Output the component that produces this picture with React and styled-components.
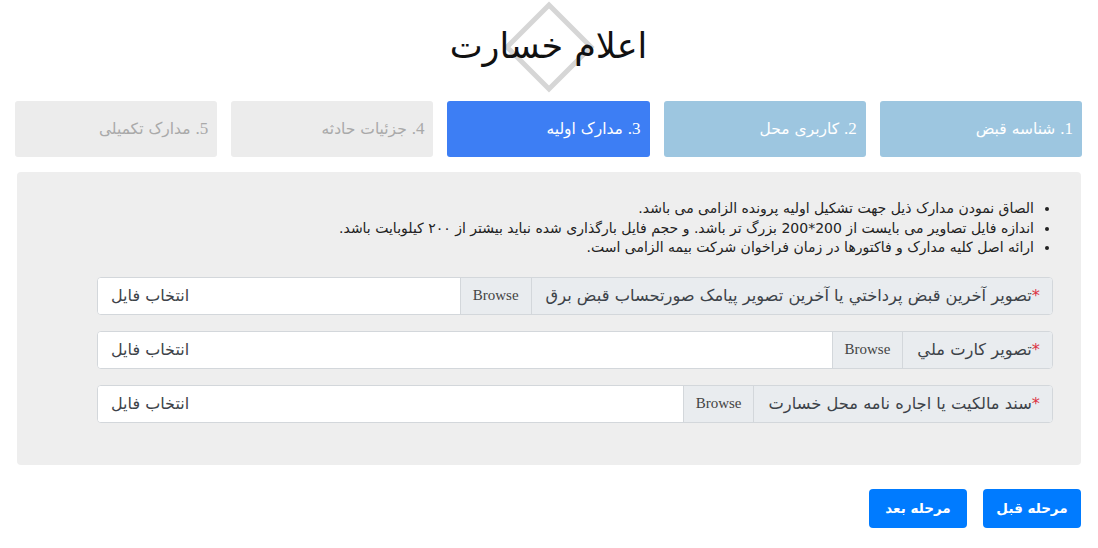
import React from 'react';
import { styled, createGlobalStyle } from 'styled-components';

const GlobalStyle = createGlobalStyle`
   html, body {
      margin: 0;
      padding: 0;
      background: #fff;
   }
   body {
      font-family: "DejaVu Sans", "Noto Sans", sans-serif;
      direction: rtl;
   }
`;

const steps = [
   { num: '1', title: 'شناسه قبض', state: 'done' },
   { num: '2', title: 'کاربری محل', state: 'done' },
   { num: '3', title: 'مدارک اولیه', state: 'active' },
   { num: '4', title: 'جزئیات حادثه', state: 'todo' },
   { num: '5', title: 'مدارک تکمیلی', state: 'todo' },
];

const notes = [
   'الصاق نمودن مدارک ذیل جهت تشکیل اولیه پرونده الزامی می باشد.',
   'اندازه فایل تصاویر می بایست از 200*200 بزرگ تر باشد. و حجم فایل بارگذاری شده نباید بیشتر از ۲۰۰ کیلوبایت باشد.',
   'ارائه اصل کلیه مدارک و فاکتورها در زمان فراخوان شرکت بیمه الزامی است.',
];

const uploads = [
   'تصویر آخرین قبض پرداختي يا آخرين تصوير پیامک صورتحساب قبض برق',
   'تصوير کارت ملي',
   'سند مالکيت يا اجاره نامه محل خسارت',
];

const App = () => {
   return (
      <Page>
         <GlobalStyle />
         <Header>
            <Diamond viewBox="0 0 92 92">
               <polygon points="46,4 88,46 46,88 4,46" fill="none" stroke="#d6d6d6" strokeWidth="5" />
            </Diamond>
            <Title>اعلام خسارت</Title>
         </Header>

         <Steps>
            {steps.map((s) => (
               <Step key={s.num} $state={s.state}>
                  <StepText>
                     <Num>{s.num}.</Num>{' ' + s.title}
                  </StepText>
               </Step>
            ))}
         </Steps>

         <Panel>
            <Notes>
               {notes.map((n) => (
                  <li key={n}>{n}</li>
               ))}
            </Notes>
            <Fields>
               {uploads.map((u) => (
                  <FileGroup key={u}>
                     <FileLabel>
                        <Req>*</Req>{u}
                     </FileLabel>
                     <BrowseBtn>Browse</BrowseBtn>
                     <FileInput>انتخاب فايل</FileInput>
                  </FileGroup>
               ))}
            </Fields>
         </Panel>

         <Actions>
            <Button>مرحله قبل</Button>
            <Button>مرحله بعد</Button>
         </Actions>
      </Page>
   );
};

const Page = styled.div`
   width: 1098px;
   box-sizing: border-box;
   padding: 0 16px 0 15px;
`;

const Header = styled.div`
   position: relative;
   height: 101px;
   display: flex;
   justify-content: center;
   align-items: flex-start;
`;

const Diamond = styled.svg`
   position: absolute;
   top: 1px;
   left: 50%;
   width: 92px;
   height: 92px;
   margin-left: -46px;
`;

const Title = styled.h1`
   position: relative;
   margin: 16px 0 0;
   font-size: 35px;
   font-weight: normal;
   color: #111;
   line-height: 60px;
`;

const Steps = styled.div`
   display: grid;
   grid-template-columns: repeat(5, 1fr);
   gap: 14px;
`;

const stepColors = {
   done: { bg: '#9dc6e0', fg: '#fff' },
   active: { bg: '#3d7ef4', fg: '#fff' },
   todo: { bg: '#ececec', fg: '#a9a9a9' },
};

const Step = styled.div`
   height: 56px;
   border-radius: 3px;
   display: flex;
   align-items: center;
   padding: 0 9px;
   font-size: 15.5px;
   background: ${(p) => stepColors[p.$state].bg};
   color: ${(p) => stepColors[p.$state].fg};
`;

const StepText = styled.span`
   white-space: pre;
`;

const Num = styled.span`
   font-family: "Liberation Serif", serif;
   font-size: 17px;
`;

const Panel = styled.div`
   margin: 15px 1px 0 2px;
   background: #eeeeee;
   border-radius: 4px;
   padding: 27px 28px 42px 80px;
`;

const Notes = styled.ul`
   margin: 0 0 19px;
   padding: 0 19px 0 0;
   font-size: 14px;
   line-height: 19.5px;
   color: #222;
`;

const Fields = styled.div`
   display: flex;
   flex-direction: column;
   gap: 16px;
`;

const FileGroup = styled.div`
   display: flex;
   height: 38px;
   border: 1px solid #d3d7db;
   border-radius: 4px;
   box-sizing: border-box;
   overflow: hidden;
   background: #fff;
`;

const FileLabel = styled.div`
   display: flex;
   align-items: center;
   padding: 0 12px 0 14px;
   background: #e9ecef;
   color: #3d4349;
   font-size: 16.3px;
   white-space: nowrap;
`;

const Req = styled.span`
   color: #dc3545;
`;

const BrowseBtn = styled.div`
   display: flex;
   align-items: center;
   padding: 0 12px;
   background: #e9ecef;
   border-right: 1px solid #d3d7db;
   border-left: 1px solid #d3d7db;
   font-family: "Liberation Serif", serif;
   font-size: 15px;
   color: #444;
`;

const FileInput = styled.div`
   flex: 1;
   display: flex;
   align-items: center;
   justify-content: flex-end;
   padding: 0 13px;
   font-size: 16px;
   color: #3d4349;
   background: #fff;
`;

const Actions = styled.div`
   display: flex;
   gap: 16px;
   margin: 24px 1px 0 0;
`;

const Button = styled.button`
   width: 98px;
   height: 39px;
   border: none;
   border-radius: 4px;
   background: #007bff;
   color: #fff;
   font-family: "DejaVu Sans", sans-serif;
   font-size: 13.5px;
   font-weight: bold;
   cursor: pointer;
`;

export default App;
